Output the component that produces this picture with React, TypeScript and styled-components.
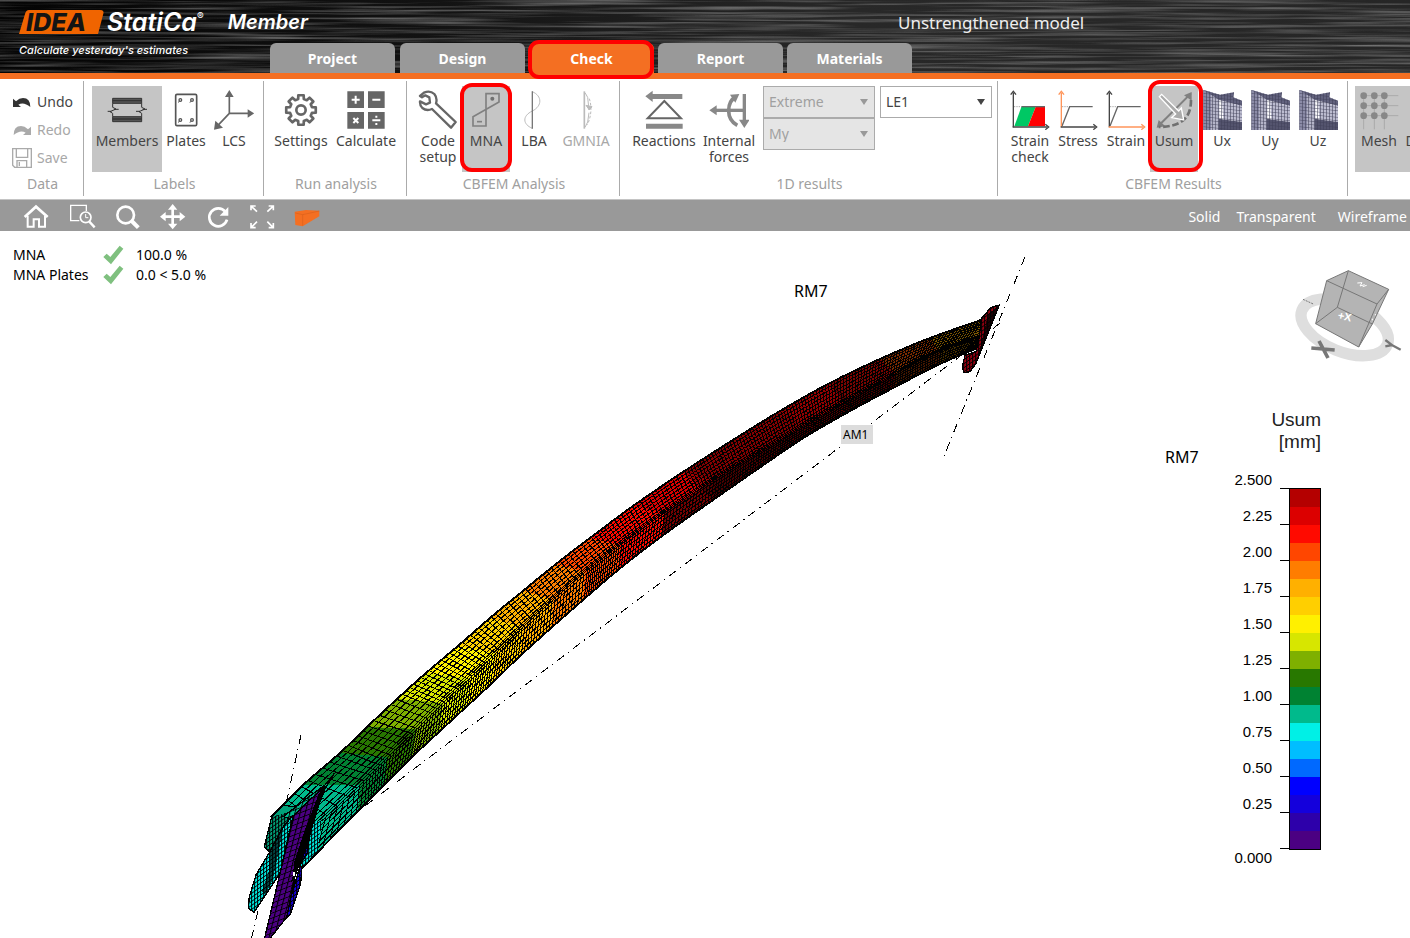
import React from "react";
import styled, { createGlobalStyle } from "styled-components";

const orange = "#f46f22";
const ui = `"Noto Sans", "Open Sans", sans-serif`;

const GlobalStyle = createGlobalStyle`
  *, *::before, *::after { box-sizing: border-box; }
  body { margin: 0; background: #fff; color: #444; font: 14px/16px ${ui}; overflow-x: hidden; }
  button, select { font: inherit; color: inherit; }
`;

const Page = styled.div`
  min-height: 100vh;
  display: flex;
  flex-direction: column;
  overflow: hidden;
`;

/* ---------- header ---------- */

const Header = styled.header`
  position: relative;
  height: 79px;
  flex: none;
  display: flex;
  align-items: stretch;
  background: #161616;
  border-bottom: 6px solid ${orange};
  color: #fff;
`;

const Texture = styled.svg`
  position: absolute;
  inset: 0;
  width: 100%;
  height: 100%;
`;

const Brand = styled.div`
  position: relative;
  width: 270px;
  flex: none;
  padding: 8px 0 0 19px;
  font-family: Inter, "Liberation Sans", sans-serif;
  font-style: italic;
  white-space: nowrap;
`;

const BrandRow = styled.div`
  display: flex;
  align-items: center;
  height: 28px;
`;

const LogoMark = styled.svg`
  width: 86px;
  height: 26px;
  flex: none;
  overflow: visible;
`;

const Wordmark = styled.span`
  margin-left: 2px;
  font-size: 25px;
  font-weight: 600;
  line-height: 28px;
`;

const Registered = styled.sup`
  align-self: flex-start;
  font-size: 10px;
  line-height: 16px;
  font-style: normal;
`;

const Product = styled.span`
  margin-left: 24px;
  font-size: 20px;
  font-weight: 600;
  line-height: 28px;
`;

const Tagline = styled.div`
  margin-top: 6px;
  font-size: 11px;
  font-weight: 500;
  line-height: 16px;
`;

const HeaderMain = styled.div`
  position: relative;
  flex: 1;
  display: flex;
  flex-direction: column;
  justify-content: flex-end;
`;

const Title = styled.h1`
  position: absolute;
  top: 10px;
  left: 628px;
  margin: 0;
  font-size: 17px;
  font-weight: 400;
  line-height: 26px;
  color: #eee;
  white-space: nowrap;
`;

const Tabs = styled.nav`
  display: flex;
  gap: 4px;
`;

const Tab = styled.button<{ $active?: boolean }>`
  position: relative;
  width: 125px;
  height: 30px;
  padding: 2px 0 0;
  border: 0;
  border-radius: 6px 6px 0 0;
  background: ${(p) => (p.$active ? orange : "#999")};
  color: #fff;
  font-weight: 700;
  &:first-child { margin-right: 1px; }
`;

const Highlight = styled.span<{ $inset: string; $radius: number }>`
  position: absolute;
  z-index: 2;
  inset: ${(p) => p.$inset};
  border: 4px solid #f00;
  border-radius: ${(p) => p.$radius}px;
  pointer-events: none;
`;

/* ---------- ribbon ---------- */

const Ribbon = styled.div`
  flex: none;
  display: flex;
  padding: 2px 0 3px;
  border-bottom: 1px solid #c4c4c4;
`;

const Group = styled.section<{ $pad?: string }>`
  flex: none;
  padding: 5px 0 0;
  border-right: 1px solid #ababab;
  &:last-child { border-right: 0; }
  > div { padding: ${(p) => p.$pad ?? "0"}; }
`;

const Items = styled.div`
  display: flex;
  height: 86px;
`;

const GroupName = styled.h2`
  margin: 0;
  padding-left: 2px;
  font-size: 14px;
  font-weight: 400;
  line-height: 24px;
  height: 24px;
  text-align: center;
  color: #a0a0a0;
`;

const Tool = styled.button<{ $width?: number; $active?: boolean }>`
  position: relative;
  width: ${(p) => p.$width ?? 48}px;
  height: 86px;
  flex: none;
  display: flex;
  flex-direction: column;
  align-items: center;
  gap: 3px;
  padding: 4px 0 0;
  border: 0;
  background: ${(p) => (p.$active ? "#c5c5c5" : "transparent")};
  line-height: 16px;
  text-align: center;
  &:disabled { color: #a8a8a8; }
`;

const ToolIcon = styled.svg`
  width: 40px;
  height: 40px;
  flex: none;
`;

const DataList = styled.div`
  width: 83px;
  height: 86px;
  display: flex;
  flex-direction: column;
`;

const DataButton = styled.button`
  display: flex;
  align-items: center;
  gap: 5px;
  height: 28px;
  padding: 4px 0 0 12px;
  border: 0;
  background: none;
  &:disabled { color: #a8a8a8; }
`;

const SmallIcon = styled.svg`
  width: 20px;
  height: 20px;
`;

const SelectColumn = styled.div`
  width: 112px;
  margin-left: 5px;
  &:first-of-type { margin-left: 6px; }
`;

const SelectBox = styled.div`
  position: relative;
  &::after {
    content: "";
    position: absolute;
    right: 7px;
    top: 13px;
    border: 4px solid transparent;
    border-top: 6px solid #444;
    border-bottom: 0;
    pointer-events: none;
  }
  &:has(:disabled)::after { border-top-color: #999; }
`;

const Select = styled.select`
  display: block;
  appearance: none;
  width: 100%;
  height: 32px;
  padding: 0 20px 0 5px;
  border: 1px solid #ababab;
  border-radius: 0;
  background: #fff;
  opacity: 1;
  &:disabled { background: #e5e5e5; color: #a0a0a0; opacity: 1; }
`;

/* ---------- view bar ---------- */

const ViewBar = styled.div`
  flex: none;
  height: 31px;
  display: flex;
  align-items: center;
  justify-content: space-between;
  padding: 2px 3px 0 14px;
  background: #999;
  color: #fff;
`;

const ViewTools = styled.div`
  display: flex;
`;

const ViewTool = styled.button`
  width: 45px;
  height: 30px;
  padding: 0;
  display: flex;
  align-items: center;
  justify-content: center;
  border: 0;
  background: none;
  svg { width: 30px; height: 30px; }
`;

const ViewModes = styled.div`
  display: flex;
  gap: 16px;
`;

const Mode = styled.button`
  padding: 0;
  border: 0;
  background: none;
  &:last-child { margin-left: 6px; }
`;

/* ---------- viewport ---------- */

const Viewport = styled.main`
  position: relative;
  flex: 1;
  color: #000;
`;

const Scene = styled.svg`
  display: block;
  width: 100%;
  height: auto;
`;

const Axis = styled.path`
  fill: none;
  stroke: #000;
  stroke-width: 1px;
  stroke-dasharray: 9 5 1 5;
`;

const Summary = styled.dl`
  position: absolute;
  top: 14px;
  left: 13px;
  margin: 0;
  display: grid;
  grid-template-columns: 123px auto;
  line-height: 20px;
  dt { display: flex; justify-content: space-between; padding-right: 12px; }
  dd { margin: 0; }
`;

const Tick = styled.svg`
  width: 22px;
  height: 20px;
`;

const Cube = styled.svg`
  position: absolute;
  right: 6px;
  top: 36px;
  width: 111px;
  height: 97px;
`;

const Legend = styled.aside`
  position: absolute;
  top: 178px;
  right: 89px;
  font-family: "Liberation Sans", Arial, sans-serif;
`;

const LegendTitle = styled.div`
  font-size: 19px;
  line-height: 22px;
  text-align: right;
  color: #222;
`;

const LegendBody = styled.div`
  display: flex;
  align-items: flex-start;
  justify-content: flex-end;
  margin-top: 19px;
`;

const LegendValues = styled.ol`
  margin: 0;
  padding: 0;
  list-style: none;
  font-size: 15px;
  text-align: right;
  li { height: 36px; line-height: 16px; }
  li:last-child { height: 16px; margin-top: 18px; }
`;

const LegendTicks = styled.div`
  width: 9px;
  margin: 16px 0 0 8px;
  border-bottom: 1px solid #000;
  i { display: block; height: 36px; border-top: 1px solid #000; }
`;

const LegendBar = styled.div`
  width: 32px;
  margin-top: 16px;
  border: 1px solid #000;
`;

const Swatch = styled.div<{ $color: string }>`
  height: 18px;
  background: ${(p) => p.$color};
`;

const legendColors = [
  "#b40000", "#dc0000", "#ff0a00", "#ff4600", "#ff7d00", "#ffb000", "#ffcf00",
  "#fff000", "#d7e600", "#7fb000", "#287800", "#008232", "#00ba8c", "#00f0e6",
  "#00beff", "#0069ff", "#0000ff", "#1400dc", "#2d00aa", "#4b0082",
];
const legendValues = ["2.500", "2.25", "2.00", "1.75", "1.50", "1.25", "1.00", "0.75", "0.50", "0.25", "0.000"];

/* ---------- member mesh ---------- */

type P = [number, number];

/* Stations along the member: back edge, crease, lower edge. */
const back: P[] = [
  [272, 816], [303, 785], [340, 753], [367, 727], [397, 699], [426, 673], [458, 646], [490, 618], [523, 591], [556, 564],
  [590, 538], [633, 506], [683, 472], [733, 440], [780, 411], [830, 383], [880, 359], [930, 338], [984, 319],
];
const crease: P[] = [
  [313, 829], [360, 785], [388, 757], [417, 729], [443, 703], [470, 678], [496, 653], [523, 627], [553, 600], [585, 572],
  [620, 545], [664, 513], [714, 480], [762, 451], [805, 425], [850, 399], [895, 374], [940, 351], [986, 335],
];
const lower: P[] = [
  [303, 867], [358, 811], [385, 784], [412, 757], [440, 731], [466, 707], [492, 683], [520, 656], [551, 628], [583, 600],
  [618, 570], [662, 536], [713, 500], [762, 466], [805, 437], [850, 411], [895, 387], [940, 364], [975, 349],
];
const bandColors = [
  "#00ba8c", "#008232", "#287800", "#7fb000", "#d7e600", "#fff000", "#ffcf00", "#ffb000", "#ff7d00",
  "#ff4600", "#ff0a00", "#dc0000", "#b40000", "#b40000", "#c80000", "#ff0a00", "#ff5a00", "#ffb000",
];

/* Catmull-Rom interpolation keeps the edges smooth between stations. */
const at = (line: P[], s: number): P => {
  const last = line.length - 1;
  const c = Math.max(0, Math.min(last, s));
  const i = Math.min(last - 1, Math.floor(c));
  const f = c - i;
  const q = [line[Math.max(0, i - 1)], line[i], line[i + 1], line[Math.min(last, i + 2)]];
  const axis = (k: 0 | 1) =>
    0.5 *
    (2 * q[1][k] +
      (q[2][k] - q[0][k]) * f +
      (2 * q[0][k] - 5 * q[1][k] + 4 * q[2][k] - q[3][k]) * f * f +
      (3 * q[1][k] - q[0][k] - 3 * q[2][k] + q[3][k]) * f * f * f);
  return [axis(0), axis(1)];
};
const mix = (a: P, b: P, f: number): P => [a[0] + (b[0] - a[0]) * f, a[1] + (b[1] - a[1]) * f];
const fmt = (p: P) => `${p[0].toFixed(1)} ${p[1].toFixed(1)}`;

const sample = (line: P[], from: number, to: number): P[] => {
  const n = Math.round(Math.abs(to - from) * 4);
  return Array.from({ length: n + 1 }, (_, i) => at(line, from + ((to - from) * i) / n));
};
const poly = (pts: P[]) => "M" + pts.map(fmt).join("L") + "Z";
const along = (a: P[], b: P[], f: number) => {
  const bs = sample(b, 0, 18);
  return "M" + sample(a, 0, 18).map((p, i) => fmt(mix(p, bs[i], f))).join("L");
};

const meshPath = () => {
  const parts: string[] = [];
  [0.13, 0.26, 0.39, 0.52, 0.65, 0.78, 0.88, 0.94].forEach((f) => parts.push(along(back, crease, f)));
  [0.12, 0.3, 0.48, 0.66, 0.84].forEach((f) => parts.push(along(crease, lower, f)));
  let s = 0;
  while (s < 18) {
    parts.push(`M${fmt(at(back, s))}L${fmt(at(crease, s - 0.4))}`);
    s += s < 4 ? 0.19 : s < 10 ? 0.13 : s < 12 ? 0.08 : 0.06;
  }
  s = 0;
  while (s < 18) {
    parts.push(`M${fmt(at(crease, s))}L${fmt(at(lower, s - 0.03))}`);
    s += s < 4 ? 0.11 : s < 9 ? 0.1 : s < 12 ? 0.065 : 0.055;
  }
  return parts.join("");
};

const Member = () => (
  <g shapeRendering="crispEdges">
    {bandColors.map((color, i) => (
      <path
        key={i}
        fill={color}
        d={poly([...sample(back, i, i + 1), at(crease, i + 1), ...sample(lower, i + 1, i), at(crease, i)])}
      />
    ))}
    <path d={meshPath()} fill="none" stroke="#000" strokeWidth="1" />
    <path
      d={poly([...sample(back, 0, 18), at(crease, 18), ...sample(lower, 18, 0), at(crease, 0)])}
      fill="none"
      stroke="#000"
      strokeWidth="2"
    />
    <path d={along(crease, lower, 0)} fill="none" stroke="#000" />
    <path d={poly([...sample(crease, 11, 18), ...sample(lower, 18, 11)])} fill="#000" opacity="0.45" />
    <path d={poly([...sample(back, 12, 18), ...sample(lower, 18, 12)])} fill="#000" opacity="0.25" />
    <path d={poly([...sample(back, 15, 18), ...sample(lower, 18, 15)])} fill="#000" opacity="0.35" />
  </g>
);

const NearPlates = () => (
  <g transform="translate(230 720) scale(0.33333)" stroke="#000" strokeWidth="4" shapeRendering="crispEdges">
    <path fill="#00a078" d="M125 290 160 255 200 262 190 300 165 370 120 398 103 380Z" />
    <path fill="url(#fine)" stroke="none" d="M125 290 200 270 190 300 165 370 120 398 103 380Z" />
    <path fill="#00ba8c" d="M313 160 285 195 230 235 160 290 190 300 280 215Z" />
    <path fill="url(#plate)" stroke="none" d="M313 160 285 195 230 235 160 290 190 300 280 215Z" />
    <path fill="#00f0e6" d="M190 285 150 460 110 520 72 577 55 565 58 530 78 465 118 398 160 320Z" />
    <path fill="url(#fine)" stroke="none" d="M190 285 150 460 110 520 72 577 55 565 58 530 78 465 118 398 160 320Z" />
    <path fill="#000" stroke="none" opacity="0.7" d="M160 320 118 400 118 450 95 515 105 525 128 480 145 400Z" />
    <path fill="#00f0e6" stroke="none" d="M245 305 275 303 270 345 264 392 222 436 205 440Z" />
    <path fill="url(#fine)" stroke="none" d="M245 305 275 303 270 345 264 392 222 436 205 440Z" />
    <path fill="#1400dc" d="M275 225 240 325 232 400 208 436 216 442 212 490 182 580 160 605Z" />
    <path fill="url(#fine)" stroke="none" d="M275 225 240 325 232 400 208 436 216 442 212 490 182 580 160 605Z" />
    <path fill="#4b0082" d="M285 197 192 285 150 460 103 658 118 658 170 592 195 470 240 320Z" />
    <path fill="url(#plate)" stroke="none" d="M285 197 192 285 150 460 103 658 118 658 170 592 195 470 240 320Z" />
    <path fill="#000" d="M285 197 268 222 225 335 195 425 190 470 185 485 205 440 235 370 250 290 283 215Z" />
    <path fill="#fff" stroke="none" d="M188 455h8v12h-8z" />
  </g>
);

const FarPlate = () => (
  <g transform="translate(780 240) scale(0.33333)" stroke="#000" strokeWidth="4" shapeRendering="crispEdges">
    <path
      fill="#960010"
      d="M658 195 632 203 605 235 596 300 588 335 555 345 547 382 552 398 570 395 588 370 600 340 640 240Z"
    />
    <path
      fill="url(#fine)"
      stroke="none"
      d="M658 195 632 203 605 235 596 300 588 335 555 345 547 382 552 398 570 395 588 370 600 340 640 240Z"
    />
    <path fill="#000" stroke="none" opacity="0.8" d="M658 195 625 222 606 300 588 370 600 340 640 240Z" />
  </g>
);

const Model = () => (
  <Scene viewBox="0 231 1410 707" role="img" aria-label="Deformed member">
    <defs>
      <pattern id="fine" width="9" height="12" patternUnits="userSpaceOnUse" patternTransform="skewY(-35)">
        <path d="M1.5 0V12M0 1.5H9" stroke="#000" strokeWidth="3" fill="none" />
      </pattern>
      <pattern id="plate" width="15" height="17" patternUnits="userSpaceOnUse" patternTransform="rotate(14) skewY(-35)">
        <path d="M1.5 0V17M0 1.5H15" stroke="#000" strokeWidth="3" fill="none" />
      </pattern>
    </defs>
    <g shapeRendering="crispEdges">
      <Axis d="M1025 257 942 461" />
      <Axis d="M963 354 365 806" />
      <Axis d="M301 735 286 804" />
      <Axis d="M258 911 251 940" />
      <Axis d="M1000 323 990 331" />
    </g>
    <Member />
    <NearPlates />
    <FarPlate />
    <rect x="841" y="425" width="32" height="19" fill="#dcdcdc" />
    <g fontFamily={ui} fill="#000">
      <text x="843" y="439" fontSize="12">AM1</text>
      <text x="794" y="297" fontSize="16">RM7</text>
      <text x="1165" y="463" fontSize="16">RM7</text>
    </g>
  </Scene>
);

const ViewCube = () => (
  <Cube viewBox="459 51 333 291" role="img" aria-label="View cube">
    <ellipse cx="614" cy="232" rx="138" ry="73" fill="none" stroke="#dedede" strokeWidth="34" transform="rotate(22 614 232)" />
    <path d="M489 148 522 163" stroke="#777" strokeWidth="3" strokeDasharray="6 3" />
    <path d="M625 62 746 118 697 222 656 291 527 221 560 92Z" fill="#b4b4b4" />
    <path
      d="M625 62 746 118 697 222 656 291 527 221 560 92ZM560 92 711 162 746 118M711 162 656 291M625 62 592 172 527 221M592 172 697 222"
      fill="none"
      stroke="#777"
      strokeWidth="3"
    />
    <path d="M652 99 666 98 660 108 674 104M668 110 680 106" fill="none" stroke="#fff" strokeWidth="3" />
    <path d="M697 206v5M706 192v4" stroke="#fff" strokeWidth="3" />
    <g fontFamily="Liberation Sans, Arial, sans-serif" fontWeight="700">
      <text x="592" y="206" fontSize="33" fill="#fff" transform="rotate(12 592 206)">+X</text>
    </g>
    <g stroke="#777">
      <path d="M514 294 584 300M537 273 564 324" strokeWidth="11" />
      <path d="M736 270 756 285 736 289M754 284 782 299" fill="none" strokeWidth="7" />
    </g>
  </Cube>
);

/* ---------- icons ---------- */

const ink = "#666";

const MembersIcon = () => (
  <ToolIcon viewBox="321 30 120 120" fill="none" stroke="#333" strokeWidth="3">
    <path d="M338 55H425V70H338ZM338 110H425V125H338Z" fill="#555" />
    <path d="M338 62H425M338 117H425" strokeWidth="4" />
    <path d="M338 70V82L348 87 330 95 338 100V110M425 70V82L435 87 417 95 425 100V110M323 94H334M342 88H356M408 94H420M428 88H441" />
  </ToolIcon>
);

const PlatesIcon = () => (
  <ToolIcon viewBox="498 30 120 120" fill="none" stroke="#555">
    <rect x="527" y="43" width="63" height="94" rx="4" strokeWidth="5" />
    {[[541, 60], [576, 60], [541, 120], [576, 120]].map(([x, y]) => (
      <circle key={`${x}-${y}`} cx={x} cy={y} r="4" strokeWidth="4" />
    ))}
    <path d="M534 67l5-3M569 67l5-3M534 127l5-3M569 127l5-3" strokeWidth="3" />
  </ToolIcon>
);

const LcsIcon = () => (
  <ToolIcon viewBox="642 30 120 120" fill="none" stroke={ink} strokeWidth="5">
    <path d="M688 46V100H748M688 100 656 134" />
    <path d="M688 30 701 51H675ZM763 100 743 88V113ZM642 149 646 122 669 143Z" fill={ink} stroke="none" />
  </ToolIcon>
);

const gear = (() => {
  const pts: string[] = [];
  for (let i = 0; i < 8; i++) {
    const base = (i * Math.PI) / 4 - Math.PI / 2;
    [[-0.25, 34], [-0.18, 45], [0.18, 45], [0.25, 34]].forEach(([a, r]) =>
      pts.push(`${(903 + r * Math.cos(base + a)).toFixed(1)} ${(90 + r * Math.sin(base + a)).toFixed(1)}`)
    );
  }
  return "M" + pts.join("L") + "Z";
})();

const SettingsIcon = () => (
  <ToolIcon viewBox="843 30 120 120" fill="none" stroke={ink} strokeWidth="8" strokeLinejoin="round">
    <path d={gear} />
    <circle cx="903" cy="90" r="14" />
  </ToolIcon>
);

const CalculateIcon = () => (
  <ToolIcon viewBox="1038 30 120 120">
    <path fill={ink} d="M1042 34h50v50h-50zM1104 34h50v50h-50zM1042 96h50v50h-50zM1104 96h50v50h-50z" />
    <path
      fill="none"
      stroke="#fff"
      strokeWidth="6"
      d="M1055 59h24M1067 47v24M1117 59h24M1060 114l15 15M1075 114l-15 15M1117 121h24M1129 107v6M1129 129v6"
    />
  </ToolIcon>
);

const WrenchIcon = () => (
  <ToolIcon viewBox="54 30 120 120" fill="none" stroke={ink} strokeWidth="7" strokeLinejoin="round">
    <path d="M60 48 72 38Q90 30 103 42 113 54 108 70L167 126 153 143 96 87Q80 94 67 84 59 76 60 64L78 73 90 68 88 52 76 46 66 52Z" />
  </ToolIcon>
);

const MnaIcon = () => (
  <ToolIcon viewBox="198 30 120 120" fill="none" stroke="#808080" strokeWidth="5">
    <path d="M258 41H297V66L219 110V138H258Z" />
    <path d="M231 125H246" />
    <circle cx="277" cy="56" r="6" fill="#707070" stroke="none" />
  </ToolIcon>
);

const LbaIcon = () => (
  <ToolIcon viewBox="342 30 120 120" fill="none">
    <path d="M397 35C427 48 427 78 397 93 366 108 368 133 397 145" stroke="#bbb" strokeWidth="3" />
    <path d="M397 34V146" stroke="#777" strokeWidth="4" />
  </ToolIcon>
);

const GmniaIcon = () => (
  <ToolIcon viewBox="498 30 120 120" fill="none" stroke="#bbb" strokeWidth="3">
    <path d="M553 34V146" strokeWidth="5" />
    <path d="M555 38 563 52 567 90M567 98 563 126 555 142" />
    <path d="M568 56C576 80 574 110 562 134" strokeDasharray="8 5" />
    <path d="M558 76 568 90 576 80Z" fill="#bbb" />
  </ToolIcon>
);

const ReactionsIcon = () => (
  <ToolIcon viewBox="732 30 120 120">
    <path fill="#888" d="M736 49 758 32V42H847V57H758V66ZM738 131H848V146H738Z" />
    <path fill="none" stroke="#666" strokeWidth="6" d="M793 63 743 115H843Z" />
  </ToolIcon>
);

const ForcesIcon = () => (
  <ToolIcon viewBox="927 30 120 120" fill="none" stroke="#888" strokeWidth="10">
    <path d="M948 91H1032" />
    <path d="M1008 50Q986 62 986 92 986 122 1012 136" strokeWidth="11" />
    <path d="M1033 42V124" />
    <path fill="#888" stroke="none" d="M928 91 950 76V106ZM1033 144 1017 119H1049ZM1018 42 990 44 1006 68Z" />
  </ToolIcon>
);

const ChartIcon = ({ x = "#444", y = "#444", filled }: { x?: string; y?: string; filled?: boolean }) => (
  <ToolIcon viewBox="0 0 120 120" fill="none" strokeWidth="4">
    {filled && <path fill="#00c864" d="M13 109 34 51H77L54 109Z" />}
    {filled && <path fill="#f00" d="M54 109 77 51H105V109Z" />}
    <path stroke="#aaa" strokeWidth="3" strokeDasharray="4 3" d="M12 50H32" />
    <path stroke="#666" d={filled ? "M34 50H105" : "M12 108 35 50H104"} />
    <path stroke={y} d="M10 112V8" />
    <path stroke={y} d="M2 14 10 4 18 14" />
    <path stroke={x} d="M8 111H112" />
    <path stroke={x} d="M106 103 116 111 106 119" />
  </ToolIcon>
);

const UsumIcon = () => (
  <ToolIcon viewBox="222 30 120 120" fill="none">
    <path d="M235 138 333 40" stroke="#808080" strokeWidth="6" />
    <path d="M335 36V62L312 46ZM230 143 236 120 256 139Z" fill="#808080" />
    <path d="M333 60C333 118 300 140 236 141" stroke="#707070" strokeWidth="8" strokeDasharray="20 8" />
    <path d="M238 50 245 43 296 93 304 84 311 120 275 113 287 102Z" fill="#aaa" stroke="#fff" strokeWidth="4" />
  </ToolIcon>
);

const StressPlotIcon = () => (
  <ToolIcon viewBox="366 30 120 120">
    <defs>
      <pattern id="joint" width="9" height="10" patternUnits="userSpaceOnUse" patternTransform="skewY(6)">
        <path d="M0 0H9M0 0V10" stroke="#404058" strokeWidth="3" fill="none" />
      </pattern>
    </defs>
    <path fill="#8c8ca8" d="M370 30 395 37 395 150H370Z" />
    <path fill="#b4b4c8" d="M394 44H418V150H394Z" />
    <path fill="#62627e" d="M370 30 420 44 462 37 460 52 486 62V78L418 60Z" />
    <path fill="#bcbcd0" d="M426 64 486 78V126L430 118Z" />
    <path fill="#54546e" d="M416 116 486 126V150H416Z" />
    <path fill="url(#joint)" d="M370 30 420 44 462 37 460 52 486 62V150H370Z" />
  </ToolIcon>
);

const MeshIcon = () => (
  <ToolIcon viewBox="838 30 120 120">
    <path d="M852 47V148M884 47V148M914 47V148M846 47H956M846 77H956M846 107H956" stroke="#aaa" strokeWidth="3" />
    {[852, 884, 914].map((x) => [47, 77, 107].map((y) => <circle key={`${x}-${y}`} cx={x} cy={y} r="10" fill="#888" />))}
  </ToolIcon>
);

const UndoIcon = ({ flip }: { flip?: boolean }) => (
  <SmallIcon viewBox="0 0 60 60">
    <path
      transform={flip ? "translate(60 0) scale(-1 1)" : undefined}
      fill={flip ? "#aaa" : "#333"}
      d="M3 20V45H27L19 38Q35 28 55 45 55 18 33 18 22 18 12 28Z"
    />
  </SmallIcon>
);

const SaveIcon = () => (
  <SmallIcon viewBox="0 0 60 60" fill="none" stroke="#aaa" strokeWidth="4">
    <path d="M2 2H58V58H8L2 52ZM13 2V28H47V2M15 58V38H44V58M22 42V54" />
  </SmallIcon>
);

const CheckMark = () => (
  <Tick viewBox="0 0 66 60" role="img" aria-label="passed">
    <path d="M4 36 14 26 25 36 53 2 64 11 27 58Z" fill="#7fc07f" />
  </Tick>
);

const viewIcons: { name: string; icon: React.ReactNode }[] = [
  {
    name: "Home view",
    icon: (
      <svg viewBox="66 367 90 90" fill="none" stroke="#fff" strokeWidth="8">
        <path d="M74 412 108 381 143 412" />
        <path d="M83 408V441H101V419H117V441H135V408" strokeWidth="6" />
      </svg>
    ),
  },
  {
    name: "Zoom window",
    icon: (
      <svg viewBox="201 367 90 90" fill="none" stroke="#fff" strokeWidth="4">
        <path d="M238 423H212V377H259V394" />
        <circle cx="257" cy="413" r="16" strokeWidth="5" />
        <path d="M257 403V414H265" strokeWidth="3" />
        <path d="M268 426 284 443" strokeWidth="7" />
      </svg>
    ),
  },
  {
    name: "Zoom",
    icon: (
      <svg viewBox="337 367 90 90" fill="none" stroke="#fff" strokeWidth="8">
        <circle cx="378" cy="406" r="25" />
        <path d="M396 424 416 444" strokeWidth="12" />
      </svg>
    ),
  },
  {
    name: "Pan",
    icon: (
      <svg viewBox="472 367 90 90" fill="#fff">
        <path d="M515 385h8v51h-8zM492 407h53v8h-53z" />
        <path d="M519 373 533 390H505ZM519 449 533 432H505ZM481 411 498 397V425ZM557 411 540 397V425Z" />
      </svg>
    ),
  },
  {
    name: "Rotate",
    icon: (
      <svg viewBox="608 367 90 90" fill="none" stroke="#fff" strokeWidth="8">
        <path d="M678 396A27 27 0 1 0 683 420" />
        <path d="M687 382V408H661Z" fill="#fff" stroke="none" />
      </svg>
    ),
  },
  {
    name: "Fit to window",
    icon: (
      <svg viewBox="741 367 90 90" fill="none" stroke="#fff" strokeWidth="5">
        <path d="M753 392V379H767M754 380 771 396M806 379H820V392M819 380 802 396M753 430V444H767M754 443 771 426M820 430V444H806M819 443 802 426" />
      </svg>
    ),
  },
  {
    name: "Member only",
    icon: (
      <svg viewBox="876 367 90 90" fill={orange}>
        <path d="M884 396 918 391 958 393V410L908 440 886 436Z" />
        <path d="M886 400 908 405 958 394M908 405V438" fill="none" stroke="#d9601c" strokeWidth="2" />
      </svg>
    ),
  },
];

export default function App() {
  return (
    <Page>
      <GlobalStyle />
      <Header>
        <Texture aria-hidden="true">
          <defs>
            <filter id="brushed" x="0" y="0" width="100%" height="100%">
              <feTurbulence type="fractalNoise" baseFrequency="0.006 0.4" numOctaves="3" seed="4" />
              <feColorMatrix type="matrix" values="0 0 0 0 0.45  0 0 0 0 0.45  0 0 0 0 0.45  1.1 0 0 0 -0.45" />
            </filter>
            <linearGradient id="shade">
              <stop offset="0" stopColor="#040404" />
              <stop offset="0.3" stopColor="#121212" />
              <stop offset="0.6" stopColor="#282828" />
              <stop offset="1" stopColor="#262626" />
            </linearGradient>
          </defs>
          <rect width="100%" height="100%" fill="url(#shade)" />
          <rect width="100%" height="100%" filter="url(#brushed)" />
        </Texture>
        <Brand>
          <BrandRow>
            <LogoMark viewBox="0 0 86 26" role="img" aria-label="IDEA">
              <path d="M10 1H81Q86 1 84 6L79 25H0L6 5Q7 1 10 1Z" fill="#f06400" />
              <text x="7" y="22" fontSize="25" fontWeight="800" fill="#141414">IDEA</text>
            </LogoMark>
            <Wordmark>StatiCa</Wordmark>
            <Registered>®</Registered>
            <Product>Member</Product>
          </BrandRow>
          <Tagline>Calculate yesterday's estimates</Tagline>
        </Brand>
        <HeaderMain>
          <Title>Unstrengthened model</Title>
          <Tabs>
            <Tab>Project</Tab>
            <Tab>Design</Tab>
            <Tab $active>
              Check
              <Highlight $inset="-3px 0 -6px -1px" $radius={11} />
            </Tab>
            <Tab>Report</Tab>
            <Tab>Materials</Tab>
          </Tabs>
        </HeaderMain>
      </Header>

      <Ribbon>
        <Group>
          <DataList>
            <DataButton><UndoIcon />Undo</DataButton>
            <DataButton disabled><UndoIcon flip />Redo</DataButton>
            <DataButton disabled><SaveIcon />Save</DataButton>
          </DataList>
          <GroupName>Data</GroupName>
        </Group>
        <Group $pad="0 5px 0 8px">
          <Items>
            <Tool $width={70} $active><MembersIcon />Members</Tool>
            <Tool><PlatesIcon />Plates</Tool>
            <Tool><LcsIcon />LCS</Tool>
          </Items>
          <GroupName>Labels</GroupName>
        </Group>
        <Group $pad="0 6px">
          <Items>
            <Tool $width={62}><SettingsIcon />Settings</Tool>
            <Tool $width={68}><CalculateIcon />Calculate</Tool>
          </Items>
          <GroupName>Run analysis</GroupName>
        </Group>
        <Group $pad="0 5px 0 7px">
          <Items>
            <Tool><WrenchIcon /><span>Code<br />setup</span></Tool>
            <Tool $active>
              <MnaIcon />MNA
              <Highlight $inset="-3px -2px 0 -2px" $radius={12} />
            </Tool>
            <Tool><LbaIcon />LBA</Tool>
            <Tool $width={56} disabled><GmniaIcon />GMNIA</Tool>
          </Items>
          <GroupName>CBFEM Analysis</GroupName>
        </Group>
        <Group $pad="0 5px 0 7px">
          <Items>
            <Tool $width={74}><ReactionsIcon />Reactions</Tool>
            <Tool $width={56}><ForcesIcon /><span>Internal<br />forces</span></Tool>
            <SelectColumn>
              <SelectBox>
                <Select disabled aria-label="Result position"><option>Extreme</option></Select>
              </SelectBox>
              <SelectBox>
                <Select disabled aria-label="Internal force"><option>My</option></Select>
              </SelectBox>
            </SelectColumn>
            <SelectColumn>
              <SelectBox>
                <Select aria-label="Load effect"><option>LE1</option></Select>
              </SelectBox>
            </SelectColumn>
          </Items>
          <GroupName>1D results</GroupName>
        </Group>
        <Group $pad="0 5px 0 8px">
          <Items>
            <Tool><ChartIcon filled /><span>Strain<br />check</span></Tool>
            <Tool><ChartIcon y="#ff955a" />Stress</Tool>
            <Tool><ChartIcon x="#ff955a" />Strain</Tool>
            <Tool $active>
              <UsumIcon />Usum
              <Highlight $inset="-6px -5px 0 -2px" $radius={12} />
            </Tool>
            <Tool><StressPlotIcon />Ux</Tool>
            <Tool><StressPlotIcon />Uy</Tool>
            <Tool><StressPlotIcon />Uz</Tool>
          </Items>
          <GroupName>CBFEM Results</GroupName>
        </Group>
        <Group $pad="0 0 0 7px">
          <Items>
            <Tool $active><MeshIcon />Mesh</Tool>
            <Tool $width={72} $active><ToolIcon />Deformed</Tool>
          </Items>
        </Group>
      </Ribbon>

      <ViewBar>
        <ViewTools>
          {viewIcons.map((v) => (
            <ViewTool key={v.name} aria-label={v.name}>{v.icon}</ViewTool>
          ))}
        </ViewTools>
        <ViewModes>
          <Mode>Solid</Mode>
          <Mode>Transparent</Mode>
          <Mode>Wireframe</Mode>
        </ViewModes>
      </ViewBar>

      <Viewport>
        <Model />
        <Summary>
          <dt>MNA <CheckMark /></dt>
          <dd>100.0 %</dd>
          <dt>MNA Plates <CheckMark /></dt>
          <dd>0.0 &lt; 5.0 %</dd>
        </Summary>
        <ViewCube />
        <Legend>
          <LegendTitle>Usum<br />[mm]</LegendTitle>
          <LegendBody>
            <LegendValues>{legendValues.map((v) => <li key={v}>{v}</li>)}</LegendValues>
            <LegendTicks>{legendValues.slice(1).map((v) => <i key={v} />)}</LegendTicks>
            <LegendBar>{legendColors.map((c) => <Swatch key={c} $color={c} />)}</LegendBar>
          </LegendBody>
        </Legend>
      </Viewport>
    </Page>
  );
}
